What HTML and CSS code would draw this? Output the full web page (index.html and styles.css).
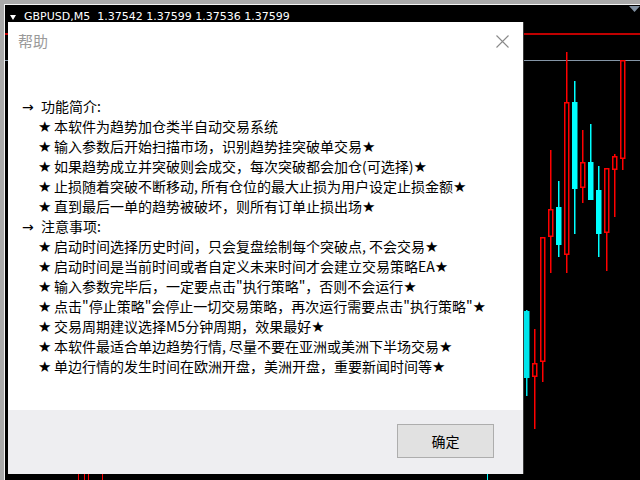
FILE: index.html
```html
<!DOCTYPE html>
<html lang="zh-CN">
<head>
<meta charset="utf-8">
<title>帮助</title>
<link rel="stylesheet" href="styles.css">
</head>
<body>
<div class="frame">
  <div class="chart">
    <svg class="plot" viewBox="5 5 635 475" width="635" height="475">
      <line x1="5" y1="34" x2="640" y2="34" stroke="#ff0000" stroke-width="1.4"/>
      <line x1="5" y1="60.5" x2="640" y2="60.5" stroke="#8495a6" stroke-width="1"/>
      <polygon points="629,6 640,6 634.5,12" fill="#7f8fa0"/>
      <g stroke-width="1.5" fill="none">
        <line x1="526.75" y1="310" x2="526.75" y2="396" stroke="#00e5ec"/>
        <rect x="524" y="311" width="5.5" height="67" fill="#00e5ec" stroke="none"/>

        <line x1="534.75" y1="329" x2="534.75" y2="363" stroke="#ff0000"/>
        <line x1="534.75" y1="377" x2="534.75" y2="429" stroke="#ff0000"/>
        <rect x="532.75" y="363.75" width="4" height="12.5" stroke="#ff0000"/>

        <line x1="542.75" y1="362" x2="542.75" y2="382" stroke="#ff0000"/>
        <rect x="540.75" y="237.75" width="4" height="123.5" stroke="#ff0000"/>

        <line x1="550.75" y1="150" x2="550.75" y2="209" stroke="#ff0000"/>
        <line x1="550.75" y1="237" x2="550.75" y2="273" stroke="#ff0000"/>
        <rect x="548.75" y="209.75" width="4" height="26.5" stroke="#ff0000"/>

        <line x1="558.75" y1="181" x2="558.75" y2="257" stroke="#00ffff"/>
        <rect x="556" y="207" width="5.5" height="38" fill="#00ffff" stroke="none"/>

        <line x1="566.75" y1="52" x2="566.75" y2="102" stroke="#ff0000"/>
        <line x1="566.75" y1="255" x2="566.75" y2="273" stroke="#ff0000"/>
        <rect x="564.75" y="102.75" width="4" height="151.5" stroke="#ff0000"/>

        <line x1="574.75" y1="81" x2="574.75" y2="234" stroke="#00ffff"/>
        <rect x="572" y="102" width="5.5" height="87" fill="#00ffff" stroke="none"/>

        <line x1="582.75" y1="130" x2="582.75" y2="162" stroke="#ff0000"/>
        <line x1="582.75" y1="188" x2="582.75" y2="203" stroke="#ff0000"/>
        <rect x="580.75" y="162.75" width="4" height="24.5" stroke="#ff0000"/>

        <line x1="590.75" y1="124" x2="590.75" y2="162" stroke="#00ffff"/>
        <rect x="588" y="162" width="5.5" height="38" fill="#00ffff" stroke="none"/>

        <line x1="598.75" y1="166" x2="598.75" y2="257" stroke="#00ffff"/>
        <rect x="596" y="190" width="5.5" height="44" fill="#00ffff" stroke="none"/>

        <line x1="606.75" y1="233" x2="606.75" y2="271" stroke="#ff0000"/>
        <rect x="604.75" y="168.75" width="4" height="63.5" stroke="#ff0000"/>

        <line x1="614.75" y1="154" x2="614.75" y2="156" stroke="#ff0000"/>
        <line x1="614.75" y1="170" x2="614.75" y2="217" stroke="#ff0000"/>
        <rect x="612.75" y="156.75" width="4" height="12.5" stroke="#ff0000"/>

        <line x1="622.75" y1="159" x2="622.75" y2="170" stroke="#ff0000"/>
        <rect x="620.75" y="60.75" width="4" height="97.5" stroke="#ff0000"/>

        <line x1="78.5" y1="468" x2="78.5" y2="480" stroke="#ff0000" stroke-width="1"/>
        <line x1="84.5" y1="468" x2="84.5" y2="480" stroke="#ff0000" stroke-width="1"/>
        <line x1="88.5" y1="468" x2="88.5" y2="480" stroke="#ff0000" stroke-width="1"/>
        <line x1="102.5" y1="468" x2="102.5" y2="480" stroke="#ff0000" stroke-width="1"/>
        <line x1="487.5" y1="468" x2="487.5" y2="480" stroke="#00ffff" stroke-width="1"/>
      </g>
    </svg>

    <div class="chart-head"><span class="tri"></span><span class="sym">GBPUSD,M5  1.37542 1.37599 1.37536 1.37599</span></div>

    <div class="dialog">
      <div class="dlg-title">
        <span class="dlg-name">帮助</span>
        <svg class="dlg-close" width="13" height="13" viewBox="0 0 13 13">
          <path d="M0.5 0.5 L12.5 12.5 M12.5 0.5 L0.5 12.5" stroke="#8a8a8a" stroke-width="1.1" fill="none"/>
        </svg>
      </div>
      <div class="dlg-body">
        <div class="hd"><span class="ar">→</span>功能简介:</div>
        <div class="li"><span class="st">★</span>本软件为趋势加仓类半自动交易系统</div>
        <div class="li"><span class="st">★</span>输入参数后开始扫描市场，识别趋势挂突破单交易<span class="se">★</span></div>
        <div class="li"><span class="st">★</span>如果趋势成立并突破则会成交，每次突破都会加仓(可选择)<span class="se">★</span></div>
        <div class="li"><span class="st">★</span>止损随着突破不断移动, 所有仓位的最大止损为用户设定止损金额<span class="se">★</span></div>
        <div class="li"><span class="st">★</span>直到最后一单的趋势被破坏，则所有订单止损出场<span class="se">★</span></div>
        <div class="hd"><span class="ar">→</span>注意事项:</div>
        <div class="li"><span class="st">★</span>启动时间选择历史时间，只会复盘绘制每个突破点, 不会交易<span class="se">★</span></div>
        <div class="li"><span class="st">★</span>启动时间是当前时间或者自定义未来时间才会建立交易策略EA<span class="se">★</span></div>
        <div class="li"><span class="st">★</span>输入参数完毕后，一定要点击"执行策略"，否则不会运行<span class="se">★</span></div>
        <div class="li"><span class="st">★</span>点击"停止策略"会停止一切交易策略，再次运行需要点击"执行策略"<span class="se">★</span></div>
        <div class="li"><span class="st">★</span>交易周期建议选择M5分钟周期，效果最好<span class="se">★</span></div>
        <div class="li"><span class="st">★</span>本软件最适合单边趋势行情, 尽量不要在亚洲或美洲下半场交易<span class="se">★</span></div>
        <div class="li"><span class="st">★</span>单边行情的发生时间在欧洲开盘，美洲开盘，重要新闻时间等<span class="se">★</span></div>
      </div>
      <div class="dlg-foot">
        <button class="btn" type="button">确定</button>
      </div>
    </div>
  </div>
</div>
</body>
</html>
```
FILE: styles.css
```css
html, body {
  margin: 0;
  padding: 0;
}
body {
  width: 640px;
  height: 480px;
  overflow: hidden;
  background: #a9a9a9;
}
.frame {
  padding: 4px 0 0 4px;
}
.chart {
  position: relative;
  height: 475px;
  background: #000;
  border-top: 1px solid #f4f4f4;
  border-left: 1px solid #f4f4f4;
}
.plot {
  position: absolute;
  left: 0;
  top: 0;
  display: block;
}
.chart-head {
  position: relative;
  display: flex;
  align-items: center;
  padding: 5px 0 0 5px;
  height: 13px;
  font-family: "DejaVu Sans", sans-serif;
  font-size: 11px;
  line-height: 13px;
  color: #fff;
  white-space: pre;
}
.tri {
  width: 0;
  height: 0;
  border-left: 3.5px solid transparent;
  border-right: 3.5px solid transparent;
  border-top: 5px solid #fff;
  margin-right: 8px;
  margin-top: 1px;
}
.dialog {
  position: absolute;
  left: 3px;
  top: 17px;
  width: 516px;
  height: 452px;
  box-sizing: border-box;
  background: #fff;
  border-right: 1px solid #3a3a3a;
  display: flex;
  flex-direction: column;
}
.dlg-title {
  height: 51px;
  box-sizing: border-box;
  padding: 9px 14px 0 10px;
  display: flex;
  justify-content: space-between;
  align-items: flex-start;
}
.dlg-name {
  font-family: "Noto Sans CJK SC", sans-serif;
  font-size: 15px;
  line-height: 20px;
  color: #9a9a9a;
}
.dlg-close {
  display: block;
  margin-top: 4px;
}
.dlg-body {
  flex: 1;
  padding: 23px 0 0 14px;
  font-family: "Noto Sans CJK SC", sans-serif;
  font-size: 14px;
  line-height: 20px;
  color: #000;
  white-space: nowrap;
}
.hd {
  height: 20px;
}
.li {
  height: 20px;
  padding-left: 16px;
}
.ar {
  display: inline-block;
  width: 19px;
  font-family: "DejaVu Sans", sans-serif;
  font-size: 14px;
}
.st {
  display: inline-block;
  width: 16px;
  font-family: "DejaVu Sans", sans-serif;
  font-size: 15px;
  line-height: 20px;
}
.se {
  font-family: "DejaVu Sans", sans-serif;
  font-size: 15px;
  line-height: 20px;
}
.dlg-foot {
  height: 64px;
  box-sizing: border-box;
  padding: 14px 29px 0 0;
  background: #eeeef1;
  display: flex;
  justify-content: flex-end;
  align-items: flex-start;
}
.btn {
  width: 97px;
  height: 34px;
  margin: 0;
  padding: 0;
  border: 1px solid #adadad;
  background: #e1e1e1;
  font-family: "Noto Sans CJK SC", sans-serif;
  font-size: 14px;
  color: #000;
}
```
